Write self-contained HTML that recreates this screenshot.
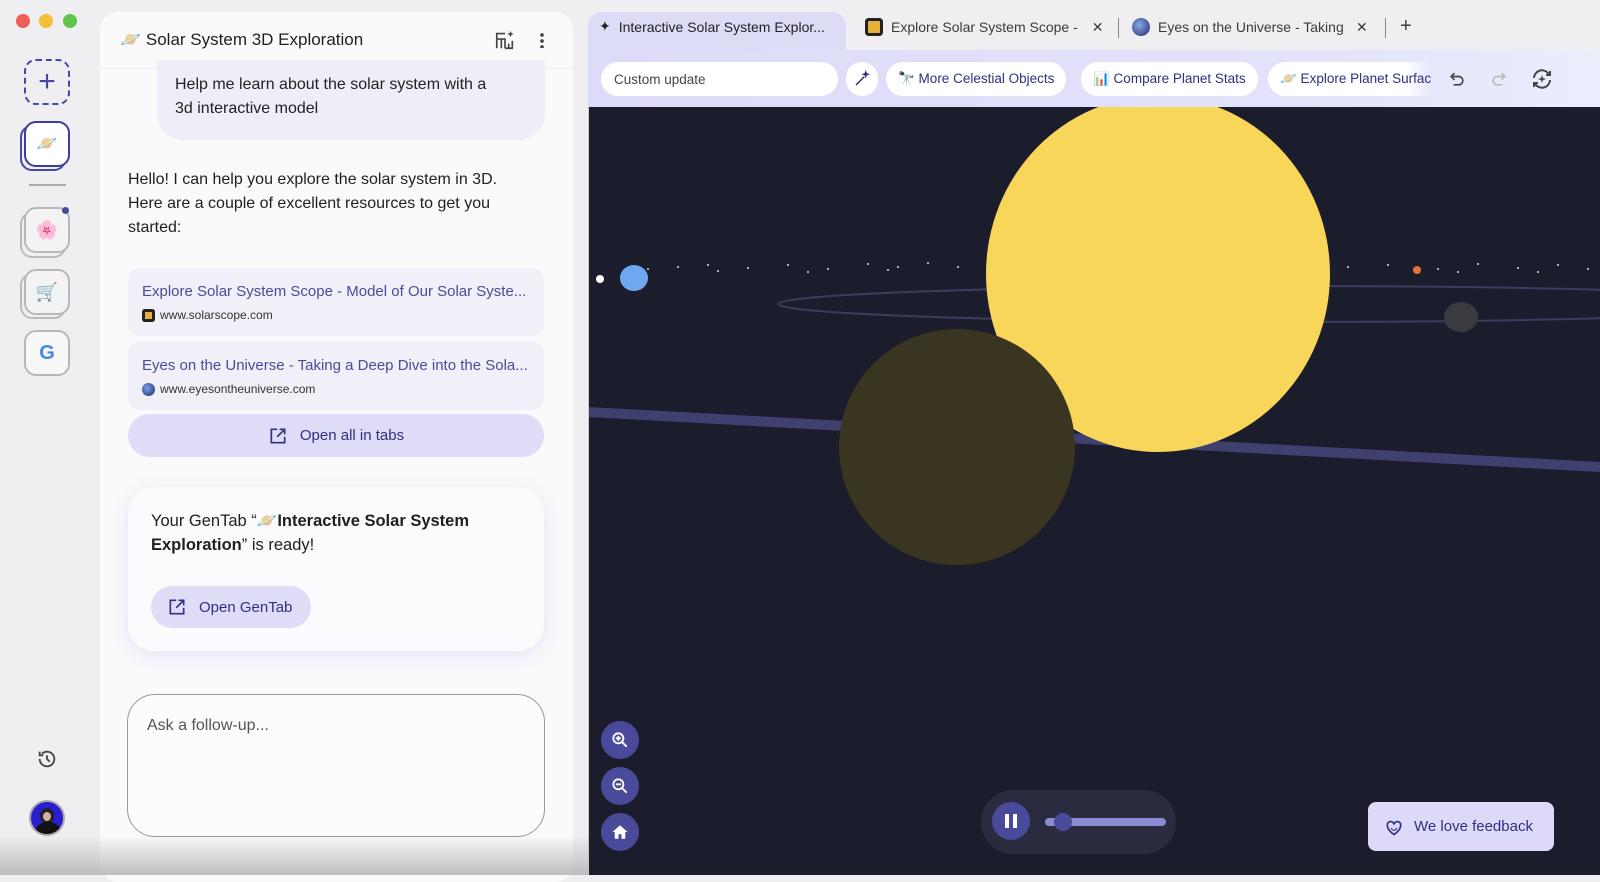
<!DOCTYPE html>
<html><head><meta charset="utf-8">
<style>
*{box-sizing:border-box;margin:0;padding:0}
body{width:1600px;height:875px;overflow:hidden;background:#efeff1;font-family:"Liberation Sans","Noto Sans CJK SC",sans-serif;position:relative;color:#1f1f1f}
.abs{position:absolute}
.dot{position:absolute;top:14px;width:14px;height:14px;border-radius:50%}
.side{position:absolute;left:24px;width:46px;height:46px;border-radius:12px;border:2px solid #b8b8bc;background:#f3f3f5;display:flex;align-items:center;justify-content:center;font-size:18px}
.panel{position:absolute;left:100px;top:12px;width:473px;height:870px;background:#fafafb;border-radius:18px}
.link{position:absolute;left:128px;width:416px;height:68px;background:#f1f0f8;border-radius:12px;padding:15px 14px}
.link .t{color:#4a4b9a;font-size:15px;white-space:nowrap;overflow:hidden}
.link .u{font-size:12px;color:#333;margin-top:8px;display:flex;align-items:center;gap:5px}
.tab{position:absolute;top:18px;font-size:14px;color:#3a3a40;display:flex;align-items:center;gap:8px;white-space:nowrap}
.chip{position:absolute;top:62px;height:34px;border-radius:17px;background:#fff;font-size:13.5px;color:#2f3080;display:flex;align-items:center;padding:0 12px;gap:7px;white-space:nowrap;overflow:hidden}
.ctl{position:absolute;left:601px;width:38px;height:38px;border-radius:50%;background:#4a4a9a;display:flex;align-items:center;justify-content:center}
</style></head><body>
<div class="dot" style="left:16px;background:#ee5e57"></div>
<div class="dot" style="left:39px;background:#f4bd3a"></div>
<div class="dot" style="left:63px;background:#5fc54b"></div>

<div class="abs" style="left:24px;top:59px;width:46px;height:46px;border:2px dashed #4648a0;border-radius:12px;display:flex;align-items:center;justify-content:center;color:#4648a0;font-size:30px;font-weight:300;line-height:1">+</div>
<div class="abs" style="left:20px;top:125px;width:46px;height:46px;border:2px solid #4648a0;border-radius:12px;"></div>
<div class="abs" style="left:24px;top:121px;width:46px;height:46px;border:2.5px solid #3c3e98;border-radius:12px;background:#fff;display:flex;align-items:center;justify-content:center;font-size:17px">🪐</div>
<div class="abs" style="left:29px;top:184px;width:37px;height:2px;background:#aaa"></div>
<div class="abs" style="left:20px;top:212px;width:46px;height:46px;border:2px solid #bbb;border-radius:12px"></div>
<div class="side" style="top:207px">🌸</div>
<div class="abs" style="left:62px;top:207px;width:7px;height:7px;border-radius:50%;background:#4648a0"></div>
<div class="abs" style="left:20px;top:273px;width:46px;height:46px;border:2px solid #bbb;border-radius:12px"></div>
<div class="side" style="top:269px">🛒</div>
<div class="side" style="top:330px;background:#f7f7f8"><span style="font-weight:bold;font-size:20px;color:#4285f4">G</span></div>
<svg class="abs" style="left:36px;top:748px" width="22" height="22" viewBox="0 0 24 24" fill="none" stroke="#444" stroke-width="2"><path d="M4 12a8 8 0 1 0 2.5-5.8"/><path d="M4 4v4h4"/><path d="M12 8v4l3 3"/></svg>
<div class="abs" style="left:29px;top:800px;width:36px;height:36px;border-radius:50%;background:#2a1fd0;border:2px solid #aaa;overflow:hidden"><div style="position:absolute;left:9px;top:6px;width:14px;height:16px;border-radius:50%;background:#222"></div><div style="position:absolute;left:5px;top:20px;width:24px;height:16px;border-radius:50% 50% 0 0;background:#111"></div><div style="position:absolute;left:12px;top:10px;width:8px;height:9px;border-radius:50%;background:#d9b0a0"></div></div>

<div class="panel"></div>
<div class="abs" style="left:100px;top:68px;width:473px;height:1px;background:#ececee"></div>
<div class="abs" style="left:120px;top:30px;font-size:17px;color:#1f1f1f">🪐 Solar System 3D Exploration</div>
<svg class="abs" style="left:494px;top:29px" width="22" height="22" viewBox="0 0 24 24" fill="none" stroke="#444" stroke-width="1.8"><path d="M3 21V5h9M3 11h9v10M8 11v10M12 21h8V13M16 21v-5"/><path d="M18 2l1 2.5L21.5 5.5 19 6.5 18 9l-1-2.5-2.5-1 2.5-1z" fill="#444" stroke="none"/></svg>
<div class="abs" style="left:540px;top:32px;width:4px;height:16px;background:radial-gradient(circle,#444 1.7px,transparent 2px) 0 0/4px 6px repeat-y"></div>

<div class="abs" style="left:157px;top:60px;width:388px;height:80px;background:#efeef8;border-radius:0 0 26px 26px;padding:13px 40px 14px 18px;font-size:16px;line-height:24px;color:#222">Help me learn about the solar system with a 3d interactive model</div>
<div class="abs" style="left:128px;top:168px;width:386px;font-size:16px;line-height:24px;color:#1f1f1f">Hello! I can help you explore the solar system in 3D. Here are a couple of excellent resources to get you started:</div>

<div class="link" style="top:268px"><div class="t">Explore Solar System Scope - Model of Our Solar Syste...</div><div class="u"><span style="width:13px;height:13px;border-radius:3px;background:#222;display:inline-block;box-shadow:inset 0 0 0 3px #222,inset 0 0 0 7px #e6b13a"></span>www.solarscope.com</div></div>
<div class="link" style="top:342px"><div class="t">Eyes on the Universe - Taking a Deep Dive into the Sola...</div><div class="u"><span style="width:13px;height:13px;border-radius:50%;background:radial-gradient(circle at 40% 40%,#7aa0e8,#1e2a60);display:inline-block"></span>www.eyesontheuniverse.com</div></div>
<div class="abs" style="left:128px;top:414px;width:416px;height:43px;background:#dedcf6;border-radius:22px;display:flex;align-items:center;justify-content:center;gap:12px;color:#2f3080;font-size:15px">
<svg width="20" height="20" viewBox="0 0 24 24" fill="none" stroke="#2f3080" stroke-width="2"><path d="M11 4H4v16h16v-7"/><path d="M14 4h6v6M20 4l-9 9"/></svg>Open all in tabs</div>

<div class="abs" style="left:128px;top:487px;width:416px;height:164px;background:#fbfbfd;border-radius:26px;box-shadow:0 4px 18px rgba(130,120,220,0.18)"></div>
<div class="abs" style="left:151px;top:509px;width:370px;font-size:16.5px;line-height:24px;color:#1f1f1f">Your GenTab “🪐<b>Interactive Solar System Exploration</b>” is ready!</div>
<div class="abs" style="left:151px;top:586px;width:160px;height:42px;background:#dedcf6;border-radius:21px;display:flex;align-items:center;padding-left:16px;gap:12px;color:#2f3080;font-size:15px">
<svg width="20" height="20" viewBox="0 0 24 24" fill="none" stroke="#2f3080" stroke-width="2"><path d="M11 4H4v16h16v-7"/><path d="M14 4h6v6M20 4l-9 9"/></svg>Open GenTab</div>

<div class="abs" style="left:127px;top:694px;width:418px;height:143px;border:1px solid #999;border-radius:28px;background:#fcfcfc;padding:22px 19px;font-size:16px;color:#555">Ask a follow-up...</div>
<div class="abs" style="left:0;top:835px;width:1600px;height:40px;background:linear-gradient(rgba(200,200,200,0),rgba(175,175,178,0.8))"></div>

<!-- browser -->
<div class="abs" style="left:588px;top:12px;width:258px;height:48px;background:#dcdcf7;border-radius:14px 14px 0 0"></div>
<div class="abs" style="left:588px;top:50px;width:1012px;height:58px;background:linear-gradient(90deg,#dddcf8,#e2e2fa 70%,#eaeefc);border-radius:0 16px 0 0"></div>
<div class="tab" style="left:599px;color:#222">✦ <span>Interactive Solar System Explor...</span></div>
<div class="tab" style="left:865px"><span style="width:18px;height:18px;border-radius:4px;background:#222;box-shadow:inset 0 0 0 3px #222,inset 0 0 0 9px #e6b13a;display:inline-block"></span><span>Explore Solar System Scope -</span><span style="margin-left:6px">✕</span></div>
<div class="abs" style="left:1118px;top:18px;width:1px;height:20px;background:#888"></div>
<div class="tab" style="left:1132px"><span style="width:18px;height:18px;border-radius:50%;background:radial-gradient(circle at 40% 40%,#8aa8ee,#1e2a60);display:inline-block"></span><span style="width:190px;overflow:hidden">Eyes on the Universe - Taking</span><span>✕</span></div>
<div class="abs" style="left:1385px;top:18px;width:1px;height:20px;background:#888"></div>
<div class="tab" style="left:1400px;font-size:20px;top:15px">+</div>

<div class="chip" style="left:601px;width:237px;color:#444;padding-left:13px">Custom update</div>
<div class="chip" style="left:846px;width:32px;padding:0;justify-content:center"><svg width="18" height="18" viewBox="0 0 24 24" fill="none" stroke="#2f3080" stroke-width="2"><path d="M4 20L15 9"/><path d="M17 3l.7 2 2 .7-2 .7-.7 2-.7-2-2-.7 2-.7z" fill="#2f3080"/></svg></div>
<div class="chip" style="left:886px">🔭 More Celestial Objects</div>
<div class="chip" style="left:1081px">📊 Compare Planet Stats</div>
<div class="chip" style="left:1268px;width:163px;border-radius:17px 0 0 17px;background:linear-gradient(90deg,#fff 85%,rgba(255,255,255,0))">🪐 Explore Planet Surfac</div>
<svg class="abs" style="left:1447px;top:69px" width="20" height="20" viewBox="0 0 24 24" fill="none" stroke="#444" stroke-width="2"><path d="M9 5L5 9l4 4"/><path d="M5 9h9a5 5 0 0 1 0 10H8"/></svg>
<svg class="abs" style="left:1489px;top:69px" width="20" height="20" viewBox="0 0 24 24" fill="none" stroke="#bbb" stroke-width="2"><path d="M15 5l4 4-4 4"/><path d="M19 9h-9a5 5 0 0 0 0 10h6"/></svg>
<svg class="abs" style="left:1530px;top:67px" width="24" height="24" viewBox="0 0 24 24" fill="none" stroke="#444" stroke-width="2"><path d="M4 11a8 8 0 0 1 14-5l2 2M20 13a8 8 0 0 1-14 5l-2-2"/><path d="M20 4v4h-4M4 20v-4h4"/><path d="M12 8l1 3 3 1-3 1-1 3-1-3-3-1 3-1z" fill="#444" stroke="none"/></svg>

<!-- scene -->
<svg class="abs" style="left:588px;top:107px" width="1012" height="768" viewBox="0 0 1012 768">
<rect width="1012" height="768" fill="#1c1d2c"/>
<path d="M0 305 L1012 360" stroke="#3f4070" stroke-width="10"/>
<ellipse cx="700" cy="197" rx="510" ry="18" fill="none" stroke="#3b3c5e" stroke-width="2"/>
<g fill="#ddd">
<circle cx="60" cy="162" r="1"/><circle cx="90" cy="160" r="1"/><circle cx="120" cy="158" r="1"/><circle cx="160" cy="161" r="1"/><circle cx="200" cy="158" r="1"/><circle cx="240" cy="162" r="1"/><circle cx="280" cy="157" r="1"/><circle cx="310" cy="160" r="1"/><circle cx="340" cy="156" r="1"/><circle cx="370" cy="160" r="1"/><circle cx="130" cy="164" r="1"/><circle cx="220" cy="165" r="1"/><circle cx="300" cy="163" r="1"/><circle cx="760" cy="160" r="1"/><circle cx="800" cy="158" r="1"/><circle cx="850" cy="162" r="1"/><circle cx="890" cy="157" r="1"/><circle cx="930" cy="161" r="1"/><circle cx="970" cy="158" r="1"/><circle cx="1000" cy="162" r="1"/><circle cx="870" cy="165" r="1"/><circle cx="950" cy="165" r="1"/>
</g>
<circle cx="12" cy="172" r="4" fill="#fff"/>
<ellipse cx="46" cy="171" rx="14" ry="13" fill="#6fa8f0"/>
<circle cx="829" cy="163" r="4" fill="#e8703a"/>
<ellipse cx="873" cy="210" rx="17" ry="15" fill="#3a3a40"/>
<ellipse cx="570" cy="167" rx="172" ry="178" fill="#f7d65a"/>
<ellipse cx="369" cy="340" rx="118" ry="118" fill="#3a3520"/>
</svg>
<div class="abs" style="left:588px;top:107px;width:1px;height:768px;background:#ccc"></div>

<div class="ctl" style="top:721px"><svg width="20" height="20" viewBox="0 0 24 24" fill="none" stroke="#fff" stroke-width="2.2"><circle cx="10" cy="10" r="6"/><path d="M14.5 14.5L20 20M7 10h6M10 7v6"/></svg></div>
<div class="ctl" style="top:767px"><svg width="20" height="20" viewBox="0 0 24 24" fill="none" stroke="#fff" stroke-width="2.2"><circle cx="10" cy="10" r="6"/><path d="M14.5 14.5L20 20M7 10h6"/></svg></div>
<div class="ctl" style="top:813px"><svg width="18" height="18" viewBox="0 0 24 24" fill="#fff"><path d="M12 3L2 12h3v9h5v-6h4v6h5v-9h3z"/></svg></div>

<div class="abs" style="left:981px;top:790px;width:195px;height:64px;border-radius:32px;background:#2a2b3e"></div>
<div class="abs" style="left:992px;top:802px;width:38px;height:38px;border-radius:50%;background:#4a4a9a;display:flex;align-items:center;justify-content:center;gap:4px"><span style="width:4px;height:14px;background:#fff"></span><span style="width:4px;height:14px;background:#fff"></span></div>
<div class="abs" style="left:1045px;top:818px;width:121px;height:8px;border-radius:4px;background:#8a8ad0"></div>
<div class="abs" style="left:1054px;top:813px;width:18px;height:18px;border-radius:50%;background:#4a4a9a"></div>

<div class="abs" style="left:1368px;top:802px;width:186px;height:49px;border-radius:8px;background:#dcdaf8;display:flex;align-items:center;padding-left:16px;gap:10px;color:#2f3080;font-size:15px">
<svg width="20" height="20" viewBox="0 0 24 24" fill="none" stroke="#2f3080" stroke-width="2"><path d="M12 21s-8-5-8-11a4 4 0 0 1 8-1 4 4 0 0 1 8 1c0 6-8 11-8 11z"/><path d="M9 13a3 3 0 0 0 6 0" stroke-width="1.5"/></svg>We love feedback</div>
</body></html>
